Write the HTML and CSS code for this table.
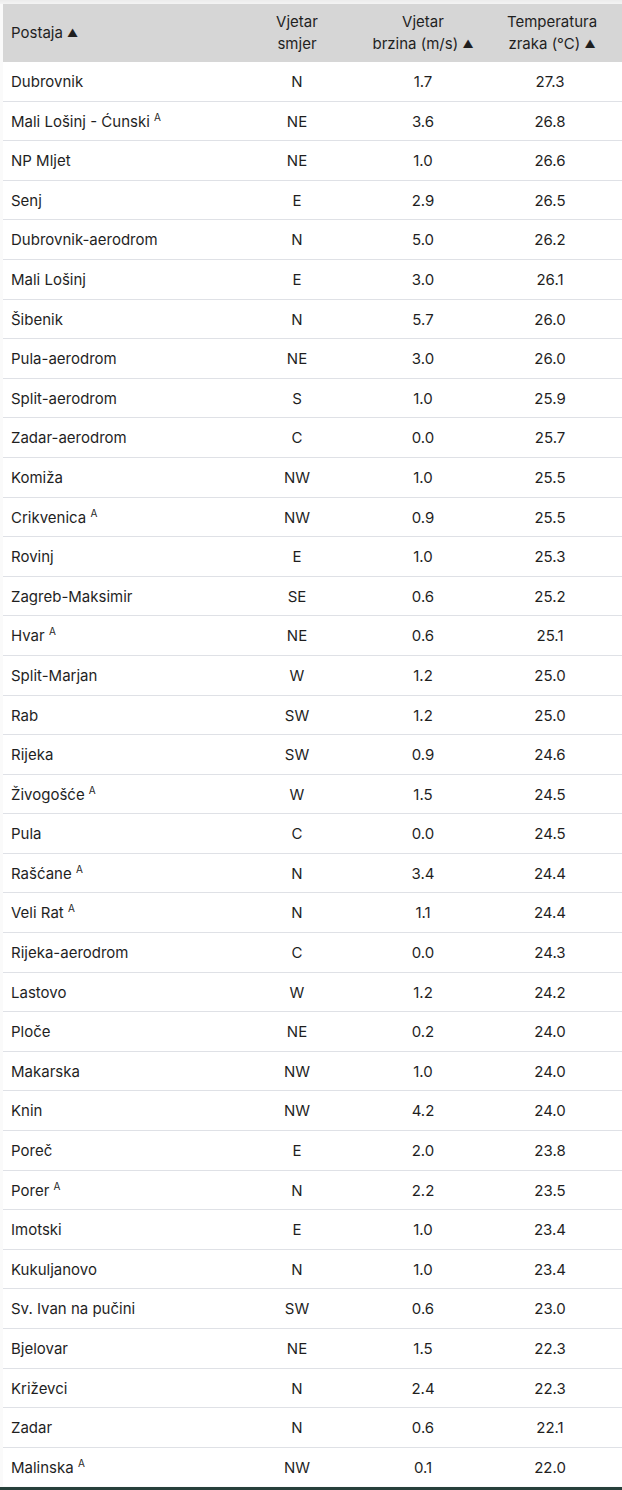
FILE: index.html
```html
<!DOCTYPE html>
<html lang="hr">
<head>
<meta charset="utf-8">
<title>Postaje</title>
<link rel="stylesheet" href="styles.css">
</head>
<body>
<div class="page">
<table class="data">
<colgroup><col class="c1"><col class="c2"><col class="c3"><col class="c4"></colgroup>
<thead>
<tr><th class="name">Postaja <span class="arrow">▲</span></th><th>Vjetar<br>smjer</th><th>Vjetar<br>brzina (m/s) <span class="arrow">▲</span></th><th>Temperatura<br>zraka (°C) <span class="arrow">▲</span></th></tr>
</thead>
<tbody>
<tr><td class="name">Dubrovnik</td><td>N</td><td>1.7</td><td>27.3</td></tr>
<tr><td class="name">Mali Lošinj - Ćunski <sup>A</sup></td><td>NE</td><td>3.6</td><td>26.8</td></tr>
<tr><td class="name">NP Mljet</td><td>NE</td><td>1.0</td><td>26.6</td></tr>
<tr><td class="name">Senj</td><td>E</td><td>2.9</td><td>26.5</td></tr>
<tr><td class="name">Dubrovnik-aerodrom</td><td>N</td><td>5.0</td><td>26.2</td></tr>
<tr><td class="name">Mali Lošinj</td><td>E</td><td>3.0</td><td>26.1</td></tr>
<tr><td class="name">Šibenik</td><td>N</td><td>5.7</td><td>26.0</td></tr>
<tr><td class="name">Pula-aerodrom</td><td>NE</td><td>3.0</td><td>26.0</td></tr>
<tr><td class="name">Split-aerodrom</td><td>S</td><td>1.0</td><td>25.9</td></tr>
<tr><td class="name">Zadar-aerodrom</td><td>C</td><td>0.0</td><td>25.7</td></tr>
<tr><td class="name">Komiža</td><td>NW</td><td>1.0</td><td>25.5</td></tr>
<tr><td class="name">Crikvenica <sup>A</sup></td><td>NW</td><td>0.9</td><td>25.5</td></tr>
<tr><td class="name">Rovinj</td><td>E</td><td>1.0</td><td>25.3</td></tr>
<tr><td class="name">Zagreb-Maksimir</td><td>SE</td><td>0.6</td><td>25.2</td></tr>
<tr><td class="name">Hvar <sup>A</sup></td><td>NE</td><td>0.6</td><td>25.1</td></tr>
<tr><td class="name">Split-Marjan</td><td>W</td><td>1.2</td><td>25.0</td></tr>
<tr><td class="name">Rab</td><td>SW</td><td>1.2</td><td>25.0</td></tr>
<tr><td class="name">Rijeka</td><td>SW</td><td>0.9</td><td>24.6</td></tr>
<tr><td class="name">Živogošće <sup>A</sup></td><td>W</td><td>1.5</td><td>24.5</td></tr>
<tr><td class="name">Pula</td><td>C</td><td>0.0</td><td>24.5</td></tr>
<tr><td class="name">Rašćane <sup>A</sup></td><td>N</td><td>3.4</td><td>24.4</td></tr>
<tr><td class="name">Veli Rat <sup>A</sup></td><td>N</td><td>1.1</td><td>24.4</td></tr>
<tr><td class="name">Rijeka-aerodrom</td><td>C</td><td>0.0</td><td>24.3</td></tr>
<tr><td class="name">Lastovo</td><td>W</td><td>1.2</td><td>24.2</td></tr>
<tr><td class="name">Ploče</td><td>NE</td><td>0.2</td><td>24.0</td></tr>
<tr><td class="name">Makarska</td><td>NW</td><td>1.0</td><td>24.0</td></tr>
<tr><td class="name">Knin</td><td>NW</td><td>4.2</td><td>24.0</td></tr>
<tr><td class="name">Poreč</td><td>E</td><td>2.0</td><td>23.8</td></tr>
<tr><td class="name">Porer <sup>A</sup></td><td>N</td><td>2.2</td><td>23.5</td></tr>
<tr><td class="name">Imotski</td><td>E</td><td>1.0</td><td>23.4</td></tr>
<tr><td class="name">Kukuljanovo</td><td>N</td><td>1.0</td><td>23.4</td></tr>
<tr><td class="name">Sv. Ivan na pučini</td><td>SW</td><td>0.6</td><td>23.0</td></tr>
<tr><td class="name">Bjelovar</td><td>NE</td><td>1.5</td><td>22.3</td></tr>
<tr><td class="name">Križevci</td><td>N</td><td>2.4</td><td>22.3</td></tr>
<tr><td class="name">Zadar</td><td>N</td><td>0.6</td><td>22.1</td></tr>
<tr class="last"><td class="name">Malinska <sup>A</sup></td><td>NW</td><td>0.1</td><td>22.0</td></tr>
</tbody>
</table>
</div>
<div class="bottom"></div>
</body>
</html>
```

FILE: styles.css
```css
html, body {
  margin: 0;
  padding: 0;
  background: #ffffff;
}
body {
  font-family: Inter, "Liberation Sans", Arial, sans-serif;
  color: #1f1f1f;
  font-size: 15px;
}
.page {
  padding: 4px 0 0 3px;
  background: linear-gradient(#ececec, #f4f4f4 4px, #fafafa 4px);
  height: 1483px;
  overflow: hidden;
}
.data {
  width: 619px;
  border-collapse: collapse;
  table-layout: fixed;
  background: #ffffff;
}
.c1 { width: 227px; }
.c2 { width: 134px; }
.c3 { width: 118px; }
.c4 { width: 140px; }
.data th {
  background: #d6d6d6;
  font-weight: 400;
  line-height: 22px;
  height: 44px;
  padding: 7px 4px;
  text-align: center;
  color: #1f1f1f;
  vertical-align: middle;
  white-space: nowrap;
}
.data th.name {
  padding-left: 8px;
}
.data td:last-child {
  padding-right: 12px;
}
.arrow {
  font-size: 11px;
  vertical-align: 1px;
}
.data td {
  line-height: 22.6px;
  height: 22.6px;
  padding: 9px 8px 7px;
  border-bottom: 1px solid #dfe1e6;
  text-align: center;
  white-space: nowrap;
}
.data tr.last td {
  border-bottom: none;
}
.data .name {
  text-align: left;
}
.data sup {
  font-size: 10px;
  line-height: 0;
  vertical-align: 6px;
}
.bottom {
  height: 3px;
  background: #27403b;
}
```
